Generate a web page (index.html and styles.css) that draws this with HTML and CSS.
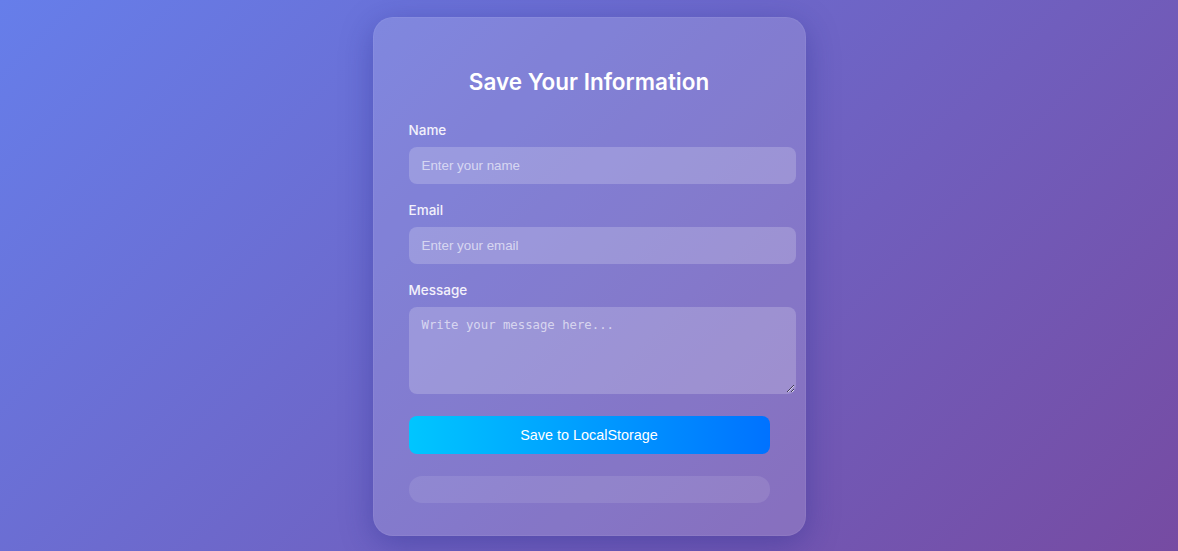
FILE: index.html
```html
<!DOCTYPE html>
<html lang="en">
<head>
<meta charset="utf-8">
<title>Save Your Information</title>
<link rel="stylesheet" href="styles.css">
</head>
<body>
<main class="card">
  <h2 class="title">Save Your Information</h2>
  <form class="form">
    <div class="group">
      <label class="label" for="name">Name</label>
      <input class="field" id="name" type="text" placeholder="Enter your name">
    </div>
    <div class="group">
      <label class="label" for="email">Email</label>
      <input class="field" id="email" type="email" placeholder="Enter your email">
    </div>
    <div class="group">
      <label class="label" for="message">Message</label>
      <textarea class="field area" id="message" placeholder="Write your message here..."></textarea>
    </div>
    <button class="save" type="button">Save to LocalStorage</button>
  </form>
  <div class="status"></div>
</main>
</body>
</html>
```

FILE: styles.css
```css
html, body {
  margin: 0;
  padding: 0;
}

body {
  box-sizing: border-box;
  min-height: 100vh;
  padding-top: 2px;
  display: flex;
  align-items: center;
  justify-content: center;
  background: linear-gradient(135deg, #667eea 0%, #764ba2 100%);
  font-family: Inter, "Noto Sans", sans-serif;
}

.card {
  width: 361px;
  padding: 49px 35px 32px;
  border: 1px solid rgba(255, 255, 255, 0.06);
  border-radius: 20px;
  background: rgba(255, 255, 255, 0.15);
  box-shadow: 0 8px 32px rgba(31, 38, 135, 0.37);
}

.title {
  margin: 0 0 23px;
  font-size: 22.5px;
  line-height: 30px;
  font-weight: 600;
  color: #ffffff;
  text-align: center;
}

.form {
  margin: 0;
}

.group {
  margin-bottom: 16px;
}

.label {
  display: block;
  margin-bottom: 7px;
  font-size: 13.5px;
  line-height: 20px;
  font-weight: 500;
  color: #f3f1fb;
}

.field {
  display: block;
  width: 100%;
  margin: 0;
  padding: 10px 12px;
  border: 1px solid transparent;
  border-radius: 8px;
  background: rgba(255, 255, 255, 0.2);
  color: #ffffff;
  font-family: "Liberation Sans", Arial, sans-serif;
  font-size: 13.333px;
  line-height: 15px;
  outline: none;
}

.field::placeholder {
  color: rgba(255, 255, 255, 0.62);
}

.area {
  height: 65px;
  font-family: "DejaVu Sans Mono", "Liberation Mono", monospace;
  font-size: 12.3px;
  line-height: 15px;
}

.save {
  display: block;
  width: 100%;
  margin-top: 22px;
  padding: 11px 0;
  border: none;
  border-radius: 8px;
  background: linear-gradient(90deg, #00c6ff 0%, #0072ff 100%);
  color: #ffffff;
  font-family: "Liberation Sans", Arial, sans-serif;
  font-size: 14.4px;
  line-height: 16px;
  cursor: pointer;
}

.status {
  margin-top: 22px;
  height: 27px;
  border-radius: 13px;
  background: rgba(255, 255, 255, 0.1);
}
```
